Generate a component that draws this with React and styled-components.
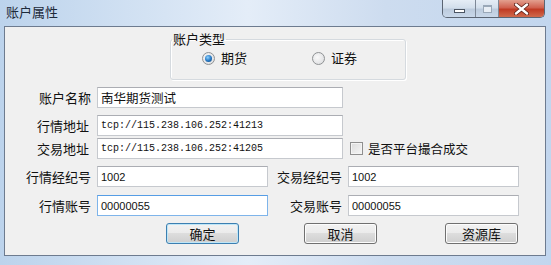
import React from 'react'
import styled, { createGlobalStyle } from 'styled-components'

const GlobalStyle = createGlobalStyle`
  html, body {
    margin: 0;
    padding: 0;
    background: #dce7f4;
  }
  * { box-sizing: border-box; }
`

const cjk = `"Noto Sans CJK SC", "Noto Sans", sans-serif`

const Window = styled.div`
  width: 551px;
  height: 265px;
  display: flex;
  flex-direction: column;
  background: linear-gradient(90deg, #bcd3ec 0%, #d6e4f4 30%, #e4edf8 45%, #cddcef 70%, #c2d6ee 100%);
  font-family: ${cjk};
  color: #111;
  overflow: hidden;
`

const TitleBar = styled.div`
  height: 26px;
  flex: none;
  display: flex;
  justify-content: space-between;
  align-items: flex-start;
`

const Title = styled.div`
  padding: 4px 0 0 6px;
  font-size: 13px;
  line-height: 16px;
  color: #1d2a3a;
`

const Caption = styled.div`
  display: flex;
  margin-right: 6px;
  height: 18px;
  border: 1px solid #5b6573;
  border-top: none;
  border-radius: 0 0 5px 5px;
  overflow: hidden;
`

const CapButton = styled.div`
  width: ${p => p.$w}px;
  height: 17px;
  display: flex;
  align-items: center;
  justify-content: center;
  background: ${p => p.$close
    ? 'linear-gradient(#e3a08f 0%, #d0614f 45%, #c03b24 55%, #d06a4c 100%)'
    : 'linear-gradient(#e5edf6 0%, #d3dfec 45%, #bccbdd 55%, #c9d8ea 100%)'};
  border-left: ${p => p.$first ? 'none' : '1px solid #7d8897'};
`

const MinGlyph = styled.div`
  width: 11px;
  height: 4px;
  margin-top: 4px;
  background: #fff;
  border: 1px solid #4b5563;
`

const MaxGlyph = styled.div`
  width: 9px;
  height: 8px;
  border: 1px solid #9aa8b8;
  border-top-width: 2px;
  background: #e8eef5;
`

const Client = styled.div`
  margin: 0 5px 0 4px;
  height: 230px;
  flex: none;
  background: #f0f0f0;
  border: 1px solid #6d7b8f;
  display: flex;
  flex-direction: column;
`

const Group = styled.fieldset`
  margin: 4px 0 0 165px;
  width: 236px;
  height: 49px;
  padding: 0;
  border: 1px solid #d5dadf;
  border-radius: 3px;
  box-shadow: inset 1px 1px 0 #fff, 1px 1px 0 #fff;
`

const Legend = styled.legend`
  margin-left: 1px;
  padding: 0 1px;
  font-size: 13px;
  line-height: 16px;
`

const RadioRow = styled.div`
  display: flex;
  align-items: center;
  padding: 3px 0 0 31px;
`

const RadioOption = styled.label`
  display: flex;
  align-items: center;
  gap: 6px;
  font-size: 13px;
  line-height: 16px;
  margin-right: ${p => p.$gap || 0}px;
`

const RadioCircle = styled.span`
  width: 13px;
  height: 13px;
  border-radius: 50%;
  border: 1px solid #8f9294;
  background: radial-gradient(circle at 40% 40%, #fafafa 0%, #e2e3e5 70%, #cfd1d3 100%);
  display: flex;
  align-items: center;
  justify-content: center;
`

const RadioDot = styled.span`
  width: 7px;
  height: 7px;
  border-radius: 50%;
  background: radial-gradient(circle at 40% 35%, #8fd3ff 0%, #2a7cc7 50%, #0b3f75 100%);
`

const Row = styled.div`
  display: flex;
  align-items: center;
  margin-top: ${p => p.$top}px;
  height: 21px;
`

const Label = styled.div`
  width: ${p => p.$w}px;
  padding-right: ${p => p.$pr || 0}px;
  text-align: right;
  font-size: 13px;
  line-height: 16px;
  flex: none;
`

const Field = styled.div`
  width: ${p => p.$w}px;
  height: 21px;
  margin-left: 6px;
  flex: none;
  background: #fff;
  border: 1px solid ${p => p.$focus ? '#7eb4ea' : '#c6c9ce'};
  border-top-color: ${p => p.$focus ? '#569de5' : '#abadb3'};
  display: flex;
  align-items: center;
  padding-left: 3px;
  font-family: ${p => p.$mono ? '"Liberation Mono", monospace' : p.$num ? '"Liberation Sans", Arial, sans-serif' : cjk};
  font-size: ${p => p.$mono ? 10 : p.$num ? 11 : 12.5}px;
  white-space: nowrap;
  overflow: hidden;
`

const Check = styled.label`
  display: flex;
  align-items: center;
  gap: 5px;
  margin-left: 7px;
  font-size: 12.5px;
  line-height: 16px;
`

const CheckBox = styled.span`
  width: 13px;
  height: 13px;
  border: 1px solid #8f8f8f;
  background: linear-gradient(135deg, #dcdcdc 0%, #f6f6f6 100%);
  box-shadow: inset 0 0 0 1px #f4f4f4;
`

const ButtonRow = styled.div`
  display: flex;
  margin-top: 7px;
  padding-left: 161px;
`

const Button = styled.div`
  width: 73px;
  height: 21px;
  margin-left: ${p => p.$ml || 0}px;
  border: 1px solid ${p => p.$default ? '#3c7fb1' : '#707070'};
  border-radius: 3px;
  background: linear-gradient(#f2f2f2 0%, #ebebeb 49%, #dddddd 50%, #cfcfcf 100%);
  box-shadow: inset 0 0 0 1px ${p => p.$default ? '#bfe6f7' : '#fcfcfc'};
  display: flex;
  align-items: center;
  justify-content: center;
  font-size: 13px;
`

function Radio({ label, checked, gap }) {
  return (
    <RadioOption $gap={gap}>
      <RadioCircle>{checked && <RadioDot />}</RadioCircle>
      {label}
    </RadioOption>
  )
}

export default function App() {
  return (
    <Window>
      <GlobalStyle />
      <TitleBar>
        <Title>账户属性</Title>
        <Caption>
          <CapButton $w={32} $first><MinGlyph /></CapButton>
          <CapButton $w={23}><MaxGlyph /></CapButton>
          <CapButton $w={46} $close>
            <svg width="15" height="12" viewBox="0 0 15 12">
              <path d="M2 1.5 L13 10.5 M13 1.5 L2 10.5" stroke="#5a1f17" strokeWidth="4" strokeLinecap="round" />
              <path d="M2 1.5 L13 10.5 M13 1.5 L2 10.5" stroke="#fff" strokeWidth="2.4" strokeLinecap="round" />
            </svg>
          </CapButton>
        </Caption>
      </TitleBar>
      <Client>
        <Group>
          <Legend>账户类型</Legend>
          <RadioRow>
            <Radio label="期货" checked gap={65} />
            <Radio label="证券" />
          </RadioRow>
        </Group>

        <Row $top={7}>
          <Label $w={86}>账户名称</Label>
          <Field $w={246}>南华期货测试</Field>
        </Row>
        <Row $top={7}>
          <Label $w={86} $pr={2}>行情地址</Label>
          <Field $w={246} $mono>tcp://115.238.106.252:41213</Field>
        </Row>
        <Row $top={2}>
          <Label $w={86} $pr={2}>交易地址</Label>
          <Field $w={246} $mono>tcp://115.238.106.252:41205</Field>
          <Check><CheckBox />是否平台撮合成交</Check>
        </Row>
        <Row $top={7}>
          <Label $w={86}>行情经纪号</Label>
          <Field $w={171} $num>1002</Field>
          <Label $w={74}>交易经纪号</Label>
          <Field $w={171} $num>1002</Field>
        </Row>
        <Row $top={8}>
          <Label $w={86}>行情账号</Label>
          <Field $w={171} $num $focus>00000055</Field>
          <Label $w={74}>交易账号</Label>
          <Field $w={171} $num>00000055</Field>
        </Row>

        <ButtonRow>
          <Button $default>确定</Button>
          <Button $ml={65}>取消</Button>
          <Button $ml={68}>资源库</Button>
        </ButtonRow>
      </Client>
    </Window>
  )
}
